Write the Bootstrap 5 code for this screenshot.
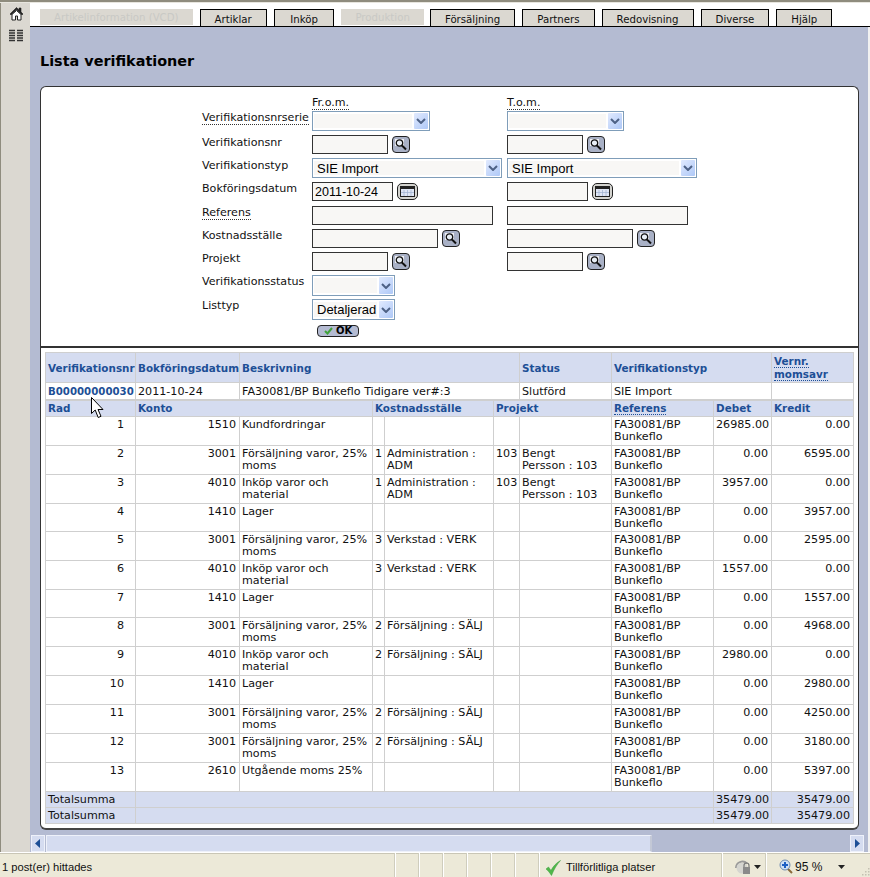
<!DOCTYPE html>
<html lang="sv">
<head>
<meta charset="utf-8">
<title>Lista verifikationer</title>
<link href="https://cdn.jsdelivr.net/npm/bootstrap@5.3.0/dist/css/bootstrap.min.css" rel="stylesheet">
<style>
html,body{height:877px;overflow:hidden;}
body{background:#dbd8d1;font-family:"DejaVu Sans",sans-serif;font-size:11.1px;color:#111;line-height:13px;position:relative;}
.topline{height:3px;background:#8f8c7e;border-bottom:1px solid #e8e6df;flex:none;}
.mainrow{height:849px;flex:none;border-left:1px solid #8f8c7e;}
.sidebar{width:29px;flex:none;background:#dbd8d1;padding:3px 0 0 8px;}
.sidebar svg{display:block;}
.content{background:#b4bbd2;min-width:0;border-right:2px solid #f1f1f1;}
.tabbar{height:24px;background:#fff;border-bottom:1px solid #000;padding-left:10px;gap:7px;flex:none;align-items:flex-end;margin-right:-2px;}
.tabx{height:17px;border:1px solid #000;border-bottom:0;background:#dbd8d1;padding:3px 14px 0;font-size:10.2px;white-space:nowrap;color:#111;}
.tabx.off{border:0;color:#c9c9c5;height:16px;margin-bottom:1px;padding:2px 14px 0;}
.tabx.wide{padding:3px 15.5px 0;}
.tabx.nudge{margin-left:-1px;}
.pagehead{font-size:14.4px;font-weight:700;line-height:18px;margin:25px 0 0 10px;height:34px;color:#000;}
.boxa,.boxb{margin-left:10px;width:819px;background:#fff;border:1px solid #333;}
.boxa{height:260px;border-radius:6px 6px 0 0;border-bottom:0;padding:9px 0 0 161px;}
.boxb{height:484px;border-top:2px solid #333;border-radius:0 0 6px 6px;border-bottom:2px solid #444;padding:4px 0 0 4px;}
.formgrid{display:grid;grid-template-columns:110px 195px 1fr;grid-template-rows:15px 24px 23px 24px 24px 23px 23px 23px 24px 26px 13px;}
.lbl{white-space:nowrap;line-height:14px;}
.lbl.low{padding-top:1px;}
.dots{border-bottom:1px dotted #333;}
.fld{display:flex;align-items:flex-start;gap:4px;}
.fldinp{height:19px;border:1px solid #333;background:#f8f7f5;border-radius:0;padding:0 2px;font-family:"Liberation Sans",sans-serif;font-size:12.5px;color:#000;outline:0;}
.w76{width:76px}.w81{width:81px}.w126{width:126px}.w181{width:181px}
.selbox{border:1px solid #7f9db9;background:#fff;height:20px;padding:1px;display:flex;justify-content:space-between;align-items:stretch;gap:2px;font-family:"Liberation Sans",sans-serif;font-size:13px;line-height:17px;color:#000;}
.selval{flex:1;background:#f8f7f5;padding-left:3px;margin:1px 0;line-height:16px;}
.selarr{width:14px;flex:none;background:linear-gradient(135deg,#e1eafe,#aec8f7);border-radius:1px;display:flex;align-items:center;justify-content:center;}
.w118{width:118px}.w117{width:117px}.w190{width:190px}.w83{width:83px}
.selbox.tall{height:21px}
.iconbtn{background:#a9b1c6;border:1px solid #222;border-radius:4px;width:18px;height:17px;margin-top:1px;display:flex;align-items:center;justify-content:center;padding:0;}
.calbtn{background:#d4d4d0;border:1px solid #222;border-radius:5px;width:21px;height:17px;margin-top:1px;display:flex;align-items:center;justify-content:center;padding:0;}
.okbtn{width:42px;height:12px;margin-left:5px;border:1px solid #222;border-radius:4px;background:#b4bbd2;font-size:10px;line-height:10px;font-weight:700;display:flex;align-items:center;justify-content:center;gap:3px;color:#000;padding:0;}
.vtab{table-layout:fixed;width:808px;margin:0;border-collapse:collapse;--bs-table-border-color:#cfcfcf;--bs-table-bg:#fff;--bs-table-color:#111;}
.c1{width:90px}.c2{width:104px}.c3{width:133px}.c4{width:12px}.c5{width:109px}.c6{width:26px}.c7{width:92px}.c8{width:102px}.c9{width:58px}.c10{width:82px}
.vtab>*>tr>*{padding:2px 2px 0;font-size:11.15px;line-height:12.4px;vertical-align:top;border:1px solid #cfcfcf;font-weight:400;background:#fff;color:#111;overflow:hidden;}
.vtab>*>tr.hd>*{background:#d5dcf0;color:#1d4f96;font-weight:700;font-size:10.4px;padding-top:2px;white-space:nowrap;}
.vtab>*>tr.hd1>*{vertical-align:middle;height:30px;padding-top:1px;}
.vtab>*>tr.hd1>*:last-child{white-space:normal;padding-top:0;}
.vtab>*>tr.dat>*{height:17px;border-bottom-width:2px;padding-top:3px;white-space:nowrap;}
.vtab>*>tr.hd2>*{height:17px;padding-top:1px;}
.vtab>*>tr.rw>*{height:29px;padding-top:2px;}
.vtab>*>tr.rw.sh>*{height:28px;}
.vtab>*>tr.tot>*{height:16px;background:#d5dcf0;padding-top:2px;color:#111;}
.vtab a{color:#1d4f96;font-weight:700;font-size:10.2px;text-decoration:none;}
.vtab>*>tr>.num{text-align:right;padding-right:3px;}
.vtab>*>tr>.radn{text-align:right;padding-right:11px;}
.vtab .dots{border-bottom-color:#1d4f96;}
.scrollb{height:17px;flex:none;margin-top:5px;background:#b4bbd2;padding:0 0 0 1px;gap:1px;}
.scbtn{width:14px;background:#d5dcf0;border:1px solid #eef1fa;display:flex;align-items:center;justify-content:center;flex:none;}
.scthumb{width:606px;background:#d5dcf0;border:1px solid #eef1fa;border-right:2px solid #c3c8d6;}
.statusb{height:25px;flex:none;background:#ece9d8;border-top:1px solid #fff;box-shadow:inset 0 1px 0 #c9c6b6;font-family:"Liberation Sans",sans-serif;font-size:11.2px;line-height:14px;color:#111;}
.stc{border-right:1px solid #fff;box-shadow:inset -1px 0 0 #cfcdbd;height:100%;flex:none;white-space:nowrap;padding-top:7px;display:flex;align-items:flex-start;gap:4px;}
.s396{width:396px;padding-left:2px}.s24{width:24px}.s183{width:183px;padding-left:5px}.s44{width:44px;padding-left:12px;gap:2px}
.sfill{flex:1;min-width:0;padding:6px 0 0 12px;display:flex;align-items:flex-start;gap:2px;}
.pct{font-size:12px;padding-top:1px;}
.crt{margin-top:5px;flex:none;}
.crtb{margin-top:6px;margin-right:13px;flex:none;}
.grip{margin-top:8px;flex:none;}
.cursorov{position:absolute;left:91px;top:397px;}
</style>
</head>
<body class="d-flex flex-column">
<div class="topline"></div>
<div class="mainrow d-flex">
  <div class="sidebar d-flex flex-column gap-2">
    <svg width="15" height="15" viewBox="0 0 15 15"><path d="M1 8 7.500 1.500 10 4V2h2v4l2 2-1 1-5.500-5.500L2 9z" fill="#222" stroke="#222" stroke-width=".6"/><path d="M3 8.500 7.500 4.500 12 8.500V14H8.500v-4h-2v4H3z" fill="#fff" stroke="#222"/></svg>
    <svg width="14" height="14" viewBox="0 0 14 14"><path d="M0 1.500h6M8 1.500h6M0 4h6M8 4h6M0 6.500h6M8 6.500h6M0 9h6M8 9h6M0 11.500h6M8 11.500h6" stroke="#333" stroke-width="1.400"/></svg>
  </div>
  <div class="content flex-grow-1 d-flex flex-column">
    <div class="tabbar d-flex">
      <div class="tabx off">Artikelinformation (VCD)</div>
      <div class="tabx">Artiklar</div>
      <div class="tabx wide">Inköp</div>
      <div class="tabx off">Produktion</div>
      <div class="tabx nudge">Försäljning</div>
      <div class="tabx">Partners</div>
      <div class="tabx">Redovisning</div>
      <div class="tabx">Diverse</div>
      <div class="tabx">Hjälp</div>
    </div>
    <div class="pagehead">Lista verifikationer</div>
    <div class="boxa">
      <div class="formgrid">
        <div></div><div class="lbl"><span class="dots">Fr.o.m.</span></div><div class="lbl"><span class="dots">T.o.m.</span></div>

        <div class="lbl"><span class="dots">Verifikationsnrserie</span></div>
        <div class="fld"><div class="selbox w118"><span class="selval"></span><span class="selarr"><svg width="10" height="6" viewBox="0 0 10 6"><path d="M1 1l4 4 4-4" fill="none" stroke="#4d6185" stroke-width="2"/></svg></span></div></div>
        <div class="fld"><div class="selbox w117"><span class="selval"></span><span class="selarr"><svg width="10" height="6" viewBox="0 0 10 6"><path d="M1 1l4 4 4-4" fill="none" stroke="#4d6185" stroke-width="2"/></svg></span></div></div>

        <div class="lbl low">Verifikationsnr</div>
        <div class="fld"><input class="fldinp w76" type="text"><button class="iconbtn" type="button" aria-label="Sök"><svg width="14" height="14" viewBox="0 0 14 14"><path d="M1 1h9v7H1z" fill="#fff" opacity=".8"/><circle cx="5.500" cy="5" r="3.200" fill="#e8eef5" stroke="#111" stroke-width="1.300"/><path d="M8 7.500l4 4" stroke="#111" stroke-width="2"/></svg></button></div>
        <div class="fld"><input class="fldinp w76" type="text"><button class="iconbtn" type="button" aria-label="Sök"><svg width="14" height="14" viewBox="0 0 14 14"><path d="M1 1h9v7H1z" fill="#fff" opacity=".8"/><circle cx="5.500" cy="5" r="3.200" fill="#e8eef5" stroke="#111" stroke-width="1.300"/><path d="M8 7.500l4 4" stroke="#111" stroke-width="2"/></svg></button></div>

        <div class="lbl low">Verifikationstyp</div>
        <div class="fld"><div class="selbox w190"><span class="selval">SIE Import</span><span class="selarr"><svg width="10" height="6" viewBox="0 0 10 6"><path d="M1 1l4 4 4-4" fill="none" stroke="#4d6185" stroke-width="2"/></svg></span></div></div>
        <div class="fld"><div class="selbox w190"><span class="selval">SIE Import</span><span class="selarr"><svg width="10" height="6" viewBox="0 0 10 6"><path d="M1 1l4 4 4-4" fill="none" stroke="#4d6185" stroke-width="2"/></svg></span></div></div>

        <div class="lbl">Bokföringsdatum</div>
        <div class="fld"><input class="fldinp w81" type="text" value="2011-10-24"><button class="calbtn" type="button" aria-label="Kalender"><svg width="15" height="11" viewBox="0 0 15 11"><rect x=".5" y=".5" width="14" height="10" fill="#dfe6f5" stroke="#222"/><rect x="1" y="1" width="13" height="2" fill="#222"/><path d="M4 4v6M7.500 4v6M11 4v6M1 6.500h13" stroke="#9fb0d0" stroke-width=".7"/></svg></button></div>
        <div class="fld"><input class="fldinp w81" type="text"><button class="calbtn" type="button" aria-label="Kalender"><svg width="15" height="11" viewBox="0 0 15 11"><rect x=".5" y=".5" width="14" height="10" fill="#dfe6f5" stroke="#222"/><rect x="1" y="1" width="13" height="2" fill="#222"/><path d="M4 4v6M7.500 4v6M11 4v6M1 6.500h13" stroke="#9fb0d0" stroke-width=".7"/></svg></button></div>

        <div class="lbl"><span class="dots">Referens</span></div>
        <div class="fld"><input class="fldinp w181" type="text"></div>
        <div class="fld"><input class="fldinp w181" type="text"></div>

        <div class="lbl">Kostnadsställe</div>
        <div class="fld"><input class="fldinp w126" type="text"><button class="iconbtn" type="button" aria-label="Sök"><svg width="14" height="14" viewBox="0 0 14 14"><path d="M1 1h9v7H1z" fill="#fff" opacity=".8"/><circle cx="5.500" cy="5" r="3.200" fill="#e8eef5" stroke="#111" stroke-width="1.300"/><path d="M8 7.500l4 4" stroke="#111" stroke-width="2"/></svg></button></div>
        <div class="fld"><input class="fldinp w126" type="text"><button class="iconbtn" type="button" aria-label="Sök"><svg width="14" height="14" viewBox="0 0 14 14"><path d="M1 1h9v7H1z" fill="#fff" opacity=".8"/><circle cx="5.500" cy="5" r="3.200" fill="#e8eef5" stroke="#111" stroke-width="1.300"/><path d="M8 7.500l4 4" stroke="#111" stroke-width="2"/></svg></button></div>

        <div class="lbl">Projekt</div>
        <div class="fld"><input class="fldinp w76" type="text"><button class="iconbtn" type="button" aria-label="Sök"><svg width="14" height="14" viewBox="0 0 14 14"><path d="M1 1h9v7H1z" fill="#fff" opacity=".8"/><circle cx="5.500" cy="5" r="3.200" fill="#e8eef5" stroke="#111" stroke-width="1.300"/><path d="M8 7.500l4 4" stroke="#111" stroke-width="2"/></svg></button></div>
        <div class="fld"><input class="fldinp w76" type="text"><button class="iconbtn" type="button" aria-label="Sök"><svg width="14" height="14" viewBox="0 0 14 14"><path d="M1 1h9v7H1z" fill="#fff" opacity=".8"/><circle cx="5.500" cy="5" r="3.200" fill="#e8eef5" stroke="#111" stroke-width="1.300"/><path d="M8 7.500l4 4" stroke="#111" stroke-width="2"/></svg></button></div>

        <div class="lbl">Verifikationsstatus</div>
        <div class="fld"><div class="selbox tall w83"><span class="selval"></span><span class="selarr"><svg width="10" height="6" viewBox="0 0 10 6"><path d="M1 1l4 4 4-4" fill="none" stroke="#4d6185" stroke-width="2"/></svg></span></div></div>
        <div></div>

        <div class="lbl">Listtyp</div>
        <div class="fld"><div class="selbox tall w83"><span class="selval">Detaljerad</span><span class="selarr"><svg width="10" height="6" viewBox="0 0 10 6"><path d="M1 1l4 4 4-4" fill="none" stroke="#4d6185" stroke-width="2"/></svg></span></div></div>
        <div></div>

        <div></div>
        <div><button class="okbtn" type="button"><svg width="9" height="8" viewBox="0 0 9 8"><path d="M1 4l2.500 2.500L8 1" fill="none" stroke="#3fa13a" stroke-width="2"/></svg>OK</button></div>
        <div></div>
      </div>
    </div>
    <div class="boxb">
      <table class="table table-bordered vtab">
        <colgroup><col class="c1"><col class="c2"><col class="c3"><col class="c4"><col class="c5"><col class="c6"><col class="c7"><col class="c8"><col class="c9"><col class="c10"></colgroup>
        <tbody>
        <tr class="hd hd1"><td>Verifikationsnr</td><td>Bokföringsdatum</td><td colspan="4">Beskrivning</td><td>Status</td><td colspan="2">Verifikationstyp</td><td><span class="dots">Vernr. momsavr</span></td></tr>
        <tr class="dat"><td><a href="#">B00000000030</a></td><td>2011-10-24</td><td colspan="4">FA30081/BP Bunkeflo Tidigare ver#:3</td><td>Slutförd</td><td colspan="2">SIE Import</td><td></td></tr>
        <tr class="hd hd2"><td>Rad</td><td colspan="2">Konto</td><td colspan="2">Kostnadsställe</td><td colspan="2">Projekt</td><td><span class="dots">Referens</span></td><td>Debet</td><td>Kredit</td></tr>
        <tr class="rw"><td class="radn">1</td><td class="num">1510</td><td>Kundfordringar</td><td></td><td></td><td></td><td></td><td>FA30081/BP Bunkeflo</td><td class="num">26985.00</td><td class="num">0.00</td></tr>
        <tr class="rw"><td class="radn">2</td><td class="num">3001</td><td>Försäljning varor, 25% moms</td><td>1</td><td>Administration : ADM</td><td>103</td><td>Bengt<br>Persson : 103</td><td>FA30081/BP Bunkeflo</td><td class="num">0.00</td><td class="num">6595.00</td></tr>
        <tr class="rw"><td class="radn">3</td><td class="num">4010</td><td>Inköp varor och material</td><td>1</td><td>Administration : ADM</td><td>103</td><td>Bengt<br>Persson : 103</td><td>FA30081/BP Bunkeflo</td><td class="num">3957.00</td><td class="num">0.00</td></tr>
        <tr class="rw sh"><td class="radn">4</td><td class="num">1410</td><td>Lager</td><td></td><td></td><td></td><td></td><td>FA30081/BP Bunkeflo</td><td class="num">0.00</td><td class="num">3957.00</td></tr>
        <tr class="rw"><td class="radn">5</td><td class="num">3001</td><td>Försäljning varor, 25% moms</td><td>3</td><td>Verkstad : VERK</td><td></td><td></td><td>FA30081/BP Bunkeflo</td><td class="num">0.00</td><td class="num">2595.00</td></tr>
        <tr class="rw"><td class="radn">6</td><td class="num">4010</td><td>Inköp varor och material</td><td>3</td><td>Verkstad : VERK</td><td></td><td></td><td>FA30081/BP Bunkeflo</td><td class="num">1557.00</td><td class="num">0.00</td></tr>
        <tr class="rw sh"><td class="radn">7</td><td class="num">1410</td><td>Lager</td><td></td><td></td><td></td><td></td><td>FA30081/BP Bunkeflo</td><td class="num">0.00</td><td class="num">1557.00</td></tr>
        <tr class="rw"><td class="radn">8</td><td class="num">3001</td><td>Försäljning varor, 25% moms</td><td>2</td><td>Försäljning : SÄLJ</td><td></td><td></td><td>FA30081/BP Bunkeflo</td><td class="num">0.00</td><td class="num">4968.00</td></tr>
        <tr class="rw"><td class="radn">9</td><td class="num">4010</td><td>Inköp varor och material</td><td>2</td><td>Försäljning : SÄLJ</td><td></td><td></td><td>FA30081/BP Bunkeflo</td><td class="num">2980.00</td><td class="num">0.00</td></tr>
        <tr class="rw"><td class="radn">10</td><td class="num">1410</td><td>Lager</td><td></td><td></td><td></td><td></td><td>FA30081/BP Bunkeflo</td><td class="num">0.00</td><td class="num">2980.00</td></tr>
        <tr class="rw"><td class="radn">11</td><td class="num">3001</td><td>Försäljning varor, 25% moms</td><td>2</td><td>Försäljning : SÄLJ</td><td></td><td></td><td>FA30081/BP Bunkeflo</td><td class="num">0.00</td><td class="num">4250.00</td></tr>
        <tr class="rw"><td class="radn">12</td><td class="num">3001</td><td>Försäljning varor, 25% moms</td><td>2</td><td>Försäljning : SÄLJ</td><td></td><td></td><td>FA30081/BP Bunkeflo</td><td class="num">0.00</td><td class="num">3180.00</td></tr>
        <tr class="rw"><td class="radn">13</td><td class="num">2610</td><td>Utgående moms 25%</td><td></td><td></td><td></td><td></td><td>FA30081/BP Bunkeflo</td><td class="num">0.00</td><td class="num">5397.00</td></tr>
        <tr class="tot"><td>Totalsumma</td><td colspan="7"></td><td class="num">35479.00</td><td class="num">35479.00</td></tr>
        <tr class="tot"><td>Totalsumma</td><td colspan="7"></td><td class="num">35479.00</td><td class="num">35479.00</td></tr>
        </tbody>
      </table>
    </div>
    <div class="scrollb d-flex"><div class="scbtn"><svg width="6" height="9" viewBox="0 0 6 9"><path d="M5 0v9L0 4.500z" fill="#1d4f96"/></svg></div><div class="scthumb"></div><div class="scbtn ms-auto me-1"><svg width="6" height="9" viewBox="0 0 6 9"><path d="M1 0v9l5-4.500z" fill="#1d4f96"/></svg></div></div>
  </div>
</div>
<div class="statusb d-flex">
  <div class="stc s396">1 post(er) hittades</div>
  <div class="stc s24"></div><div class="stc s24"></div><div class="stc s24"></div><div class="stc s24"></div><div class="stc s24"></div><div class="stc s24"></div>
  <div class="stc s183"><svg width="17" height="16" viewBox="0 0 17 16"><path d="M1 9l2.500-2 2.500 3.500C8 6.500 11 3 15.500 .5 12 4.500 9 9 6.500 15.500 4.500 12.500 3 10.500 1 9z" fill="#4fb84a" stroke="#3a9a3a" stroke-width=".5"/></svg><span>Tillförlitliga platser</span></div>
  <div class="stc s44"><svg width="17" height="15" viewBox="0 0 17 15"><path d="M1 8a6.500 6.500 0 0 1 11-4.500" fill="none" stroke="#9a9a9a" stroke-width="2"/><circle cx="7" cy="8" r="5.500" fill="#d5d5d0"/><path d="M9 7V5.500a2.500 2.500 0 0 1 5 0V7" fill="none" stroke="#777" stroke-width="1.200"/><rect x="8" y="7" width="7" height="7" fill="#8a8a8a"/></svg><svg class="crt" width="7" height="4" viewBox="0 0 7 4"><path d="M0 0h7L3.500 4z" fill="#222"/></svg></div>
  <div class="sfill"><svg width="14" height="15" viewBox="0 0 14 15"><path d="M8 9l5 5" stroke="#8a6a3a" stroke-width="2"/><circle cx="6" cy="6" r="5" fill="#cfe0f5" stroke="#6f8bb0"/><path d="M3 6h6M6 3v6" stroke="#1d5fc4" stroke-width="2"/></svg><span class="pct">95 %</span><svg class="crtb ms-auto" width="7" height="4" viewBox="0 0 7 4"><path d="M0 0h7L3.500 4z" fill="#222"/></svg><svg class="grip" width="10" height="10" viewBox="0 0 10 10"><path d="M8 1h1.500v1.500H8zM5 4h1.500v1.500H5zM8 4h1.500v1.500H8zM2 7h1.500v1.500H2zM5 7h1.500v1.500H5zM8 7h1.500v1.500H8z" fill="#c4c1b2"/></svg></div>
</div>
<svg class="cursorov" width="14" height="22" viewBox="0 0 14 22"><path d="M.5.500V16.500L4.200 13 7.200 20.500 10 19.300 7 12.500H12z" fill="#fff" stroke="#000"/></svg>
</body>
</html>
